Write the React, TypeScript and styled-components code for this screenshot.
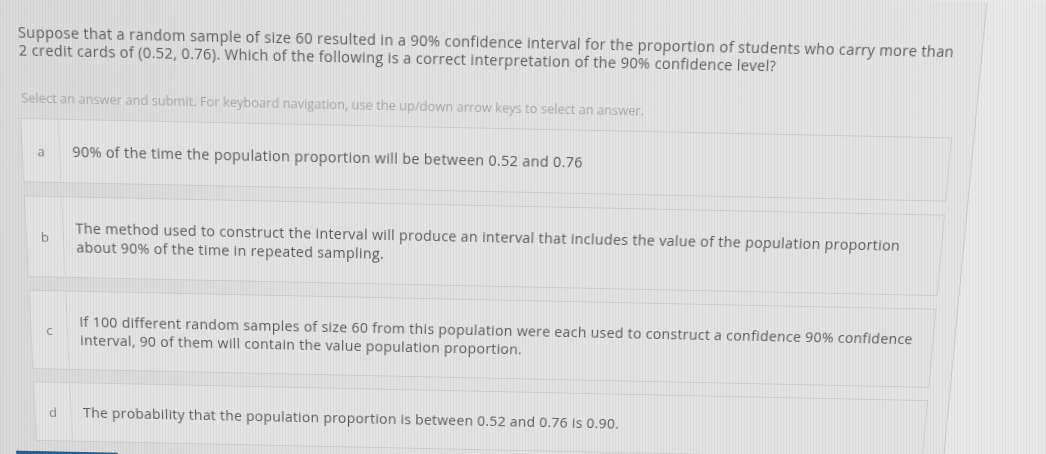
import styled, { createGlobalStyle } from "styled-components";

const GlobalStyle = createGlobalStyle`
  html, body {
    margin: 0;
    padding: 0;
    overflow: hidden;
  }
  body {
    background: #e2e2e2;
    font-family: "Open Sans", "Noto Sans", sans-serif;
  }
`;

const options = [
  {
    key: "a",
    lines: ["90% of the time the population proportion will be between 0.52 and 0.76"],
  },
  {
    key: "b",
    lines: [
      "The method used to construct the interval will produce an interval that includes the value of the population proportion",
      "about 90% of the time in repeated sampling.",
    ],
  },
  {
    key: "c",
    lines: [
      "If 100 different random samples of size 60 from this population were each used to construct a confidence 90% confidence",
      "interval, 90 of them will contain the value population proportion.",
    ],
  },
  {
    key: "d",
    lines: ["The probability that the population proportion is between 0.52 and 0.76 is 0.90."],
  },
];

export default function App() {
  return (
    <Viewport>
      <GlobalStyle />
      <Sheet>
        <Main>
          <Question>
            Suppose that a random sample of size 60 resulted in a 90% confidence interval for the proportion of students who carry more than
            <br />
            2 credit cards of (0.52, 0.76). Which of the following is a correct interpretation of the 90% confidence level?
          </Question>
          <Hint>
            Select an answer and submit. For keyboard navigation, use the up/down arrow keys to select an answer.
          </Hint>
          <Options>
            {options.map((opt) => (
              <Option key={opt.key}>
                <Letter>{opt.key}</Letter>
                <Answer>
                  {opt.lines.map((line, i) => (
                    <span key={i}>
                      {line}
                      {i < opt.lines.length - 1 && <br />}
                    </span>
                  ))}
                </Answer>
              </Option>
            ))}
          </Options>
          <Submit />
        </Main>
        <Aside />
      </Sheet>
      <Stripes />
    </Viewport>
  );
}

const Viewport = styled.div`
  position: relative;
  width: 1046px;
  height: 454px;
  overflow: hidden;
  background: linear-gradient(90deg, #d8d8d8 0%, #e1e1e1 40%, #e6e6e6 85%, #ebebeb 100%);
`;

// faint vertical moiré from the photographed screen
const Stripes = styled.div`
  position: absolute;
  inset: 0;
  pointer-events: none;
  background: repeating-linear-gradient(
    90deg,
    rgba(0, 0, 0, 0.03) 0px,
    rgba(0, 0, 0, 0.03) 1px,
    rgba(255, 255, 255, 0.03) 1px,
    rgba(255, 255, 255, 0.03) 3px
  );
`;

const Sheet = styled.div`
  display: flex;
  width: 1120px;
  height: 560px;
  transform-origin: 483px 250px;
  transform: rotate(1.2deg) perspective(800px) rotateX(-7deg);
`;

const Main = styled.div`
  box-sizing: border-box;
  width: 963px;
  flex: none;
  padding: 38px 0 0 26px;
  border-right: 1px solid #cbcbcb;
  background: linear-gradient(90deg, #d9d9d9 0%, #e1e1e1 45%, #e4e4e4 100%);
`;

const Aside = styled.div`
  flex: 1;
  background: #e9e9e9;
`;

const Question = styled.p`
  margin: 0 0 0 2px;
  font-size: 14.2px;
  line-height: 17px;
  letter-spacing: 0.34px;
  color: #5a5a5a;
  white-space: nowrap;
`;

const Hint = styled.p`
  margin: 30px 0 0 2px;
  font-size: 12.6px;
  line-height: 16px;
  color: #a6a6a6;
  white-space: nowrap;
`;

const Options = styled.div`
  display: flex;
  flex-direction: column;
  gap: 13px;
  width: 915px;
  margin-top: 11px;
`;

const Option = styled.div`
  display: flex;
  border: 1px solid #cdcdcd;
  background: #e3e3e3;
`;

const Letter = styled.div`
  width: 36px;
  flex: none;
  display: flex;
  align-items: center;
  justify-content: center;
  border-right: 1px solid #d2d2d2;
  font-size: 13px;
  color: #7a7a7a;
`;

const Answer = styled.div`
  padding: 21px 12px;
  font-size: 14.2px;
  line-height: 19px;
  letter-spacing: 0.34px;
  color: #575757;
  white-space: nowrap;
`;

const Submit = styled.div`
  width: 105px;
  height: 36px;
  margin: 11px 0 0 -21px;
  background: #2b5a86;
`;
